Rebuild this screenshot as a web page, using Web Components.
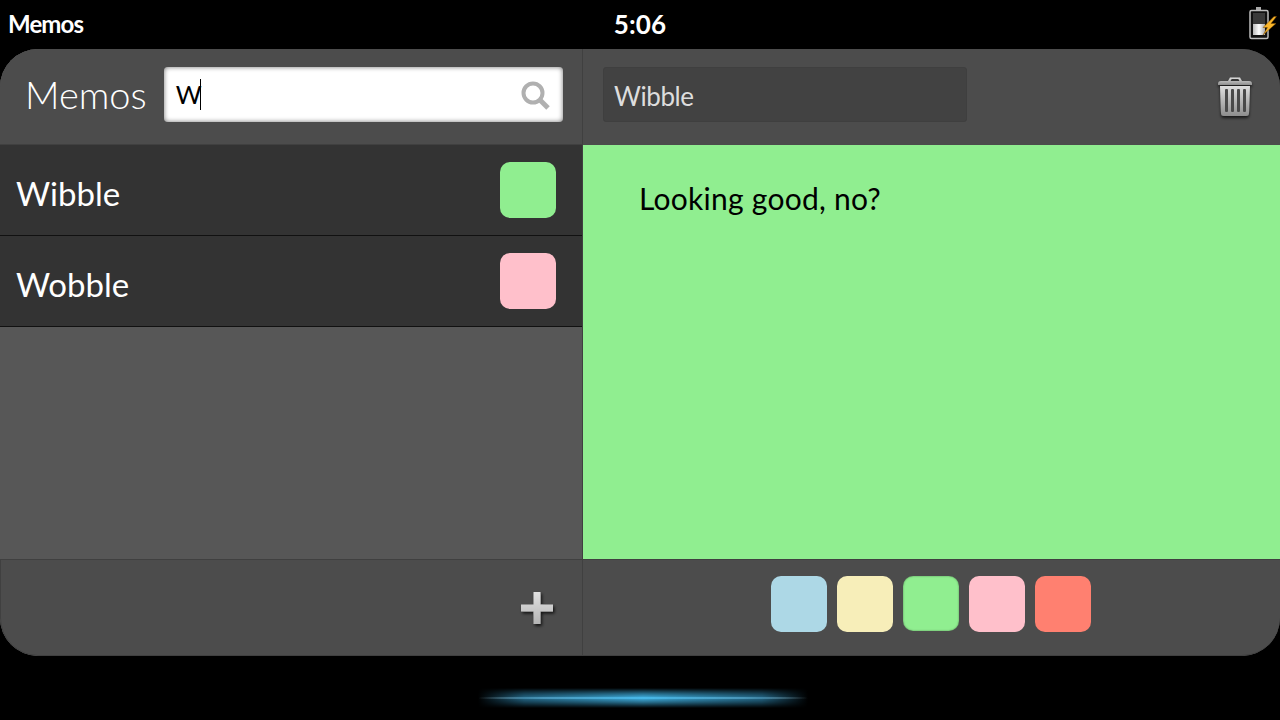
<!DOCTYPE html>
<html>
<head>
<title>Memos</title>
<style>
html,body{margin:0;height:720px;overflow:hidden;background:#000;font-family:Lato,"Open Sans",sans-serif;}
</style>
</head>
<body>
<status-bar title="Memos" time="5:06"></status-bar>
<memo-card>
  <side-pane slot="left">
    <memo-search slot="head" value="W"></memo-search>
    <memo-row name="Wibble" color="#90ee90"></memo-row>
    <memo-row name="Wobble" color="#ffc0cb"></memo-row>
    <add-button slot="foot"></add-button>
  </side-pane>
  <note-pane slot="right" title="Wibble" text="Looking good, no?" color="#90ee90">
    <color-swatch color="#add8e6"></color-swatch>
    <color-swatch color="#f7eeb9"></color-swatch>
    <color-swatch color="#90ee90" picked></color-swatch>
    <color-swatch color="#ffc0cb"></color-swatch>
    <color-swatch color="#ff8070"></color-swatch>
  </note-pane>
</memo-card>
<gesture-glow></gesture-glow>

<script>
function def(name,html,init){
  customElements.define(name,class extends HTMLElement{
    constructor(){
      super();
      this.attachShadow({mode:'open'}).innerHTML=html;
    }
    connectedCallback(){ if(init) init(this,this.shadowRoot); }
  });
}

def('status-bar',`
<style>
:host{display:grid;grid-template-columns:1fr auto 1fr;align-items:center;height:49px;color:#fff;font-weight:700;box-sizing:border-box;padding:0 0 2px 0;}
#title{font-size:24px;letter-spacing:-.9px;margin-left:8px;}
#time{font-size:26px;letter-spacing:.1px;}
svg{justify-self:end;align-self:start;display:block;}
</style>
<span id="title"></span><span id="time"></span>
<svg width="32" height="40" viewBox="0 0 32 40">
  <defs><linearGradient id="cell" x1="0" x2="1" y1="0" y2="0"><stop offset="0" stop-color="#bbb"/><stop offset=".5" stop-color="#fff"/><stop offset="1" stop-color="#aaa"/></linearGradient></defs>
  <rect x="8" y="7" width="5" height="3" fill="#aaa"/>
  <rect x="2" y="10.500" width="18" height="28" rx="1.500" fill="#111" stroke="#bdbdbd" stroke-width="1.500"/>
  <rect x="5" y="13" width="12" height="11" fill="#3a3a3a"/>
  <rect x="5" y="24" width="12" height="11" fill="url(#cell)"/>
  <path d="M26 16.500 L15 27.500 L19.500 27.500 L15 35 L28 23.500 L23 23.500 L28.500 16.500 Z" fill="#f9b52a" stroke="#7a4a00" stroke-width=".5"/>
</svg>`,(el,r)=>{
  r.getElementById('title').textContent=el.getAttribute('title');
  r.getElementById('time').textContent=el.getAttribute('time');
});

def('memo-card',`
<style>
:host{display:grid;grid-template-columns:583px 1fr;height:607px;border-radius:38px;overflow:hidden;background:#4c4c4c;}
</style>
<slot name="left"></slot><slot name="right"></slot>`);

def('side-pane',`
<style>
:host{display:grid;grid-template-rows:96px 1fr 97px;height:607px;box-sizing:border-box;border-right:1px solid #404040;background:#575757;}
header,footer{display:flex;align-items:center;background:#4c4c4c;box-sizing:border-box;}
header{gap:17px;padding:0 19px 3px 25px;border-bottom:1px solid #404040;color:#fff;font-size:38px;font-weight:300;}
header span{margin-bottom:2px;}
footer{justify-content:flex-end;padding:0 29px 0 0;border:solid #404040;border-width:1px 0 1px 1px;border-bottom-left-radius:38px;}
main{display:flex;flex-direction:column;}
</style>
<header><span>Memos</span><slot name="head"></slot></header>
<main><slot></slot></main>
<footer><slot name="foot"></slot></footer>`);

def('memo-search',`
<style>
:host{flex:1;display:flex;align-items:center;height:55px;margin-bottom:1px;box-sizing:border-box;padding:0 11px 0 12px;background:#fff;border-radius:4px;box-shadow:inset 0 0 5px rgba(0,0,0,.55);color:#000;font-size:25px;font-weight:400;}
#val{border-right:1px solid #000;line-height:31px;height:31px;letter-spacing:-1.500px;}
svg{margin-left:auto;margin-top:3px;display:block;}
</style>
<span id="val"></span>
<svg width="32" height="32" viewBox="0 0 32 32" fill="none" stroke="#b0b0b0">
  <circle cx="13" cy="13" r="9.500" stroke-width="4"/>
  <path d="M20 20 L28 28" stroke-width="5"/>
</svg>`,(el,r)=>{ r.getElementById('val').textContent=el.getAttribute('value'); });

def('memo-row',`
<style>
:host{display:flex;align-items:center;justify-content:space-between;height:91px;box-sizing:border-box;padding:0 26px 0 16px;background:#333;border-bottom:1px solid #111;color:#fff;font-size:33px;font-weight:400;}
i{display:block;width:56px;height:56px;border-radius:10px;}
span{padding-top:5px;}
</style>
<span></span><i></i>`,(el,r)=>{
  r.querySelector('span').textContent=el.getAttribute('name');
  r.querySelector('i').style.background=el.getAttribute('color');
});

def('add-button',`
<style>:host{display:block;height:32px;margin-top:1px;} svg{display:block;overflow:visible;}</style>
<svg width="32" height="32" viewBox="0 0 32 32">
  <defs><linearGradient id="p" x1="0" x2="0" y1="0" y2="1"><stop offset="0" stop-color="#e2e2e2"/><stop offset="1" stop-color="#b4b4b4"/></linearGradient>
  <filter id="s" x="-30%" y="-30%" width="170%" height="170%"><feDropShadow dx="1.500" dy="2" stdDeviation="1.500" flood-color="#000" flood-opacity=".75"/></filter></defs>
  <path d="M12.500 0 H19.500 V12.500 H32 V19.500 H19.500 V32 H12.500 V19.500 H0 V12.500 H12.500 Z" fill="url(#p)" filter="url(#s)"/>
</svg>`);

def('note-pane',`
<style>
:host{display:grid;grid-template-rows:96px 1fr 97px;height:607px;background:#4c4c4c;}
header{display:flex;align-items:center;justify-content:space-between;padding:0 27px 6px 20px;box-sizing:border-box;}
#title{width:364px;height:55px;box-sizing:border-box;padding:3px 10px 0;display:flex;align-items:center;background:#424242;border:1px solid #3f3f3f;border-radius:3px;color:#ddd;font-size:26px;letter-spacing:-.4px;}
#note{padding:35px 56px;font-size:30px;letter-spacing:.25px;color:#000;}
footer{display:flex;justify-content:center;gap:10px;padding:16px 1px 0 0;box-sizing:border-box;border:solid #404040;border-width:1px 0;border-bottom-right-radius:38px;}
svg{display:block;overflow:visible;margin-top:6px;}
</style>
<header><div id="title"></div>
<svg width="36" height="42" viewBox="0 0 36 42">
  <defs><linearGradient id="t" x1="0" x2="0" y1="0" y2="1"><stop offset="0" stop-color="#dedede"/><stop offset="1" stop-color="#8e8e8e"/></linearGradient>
  <filter id="ts" x="-20%" y="-20%" width="140%" height="140%"><feDropShadow dx="0" dy="2" stdDeviation="1.500" flood-color="#000" flood-opacity=".7"/></filter></defs>
  <g filter="url(#ts)">
    <path d="M1 8 Q1 5 4 5 H11 L13 1.500 H23 L25 5 H32 Q35 5 35 8 L35 9 H1 Z M14.500 3 L13.500 5 H22.500 L21.500 3 Z" fill="url(#t)" fill-rule="evenodd"/>
    <path d="M3 10 H33 L32 37 Q32 40 29 40 H7 Q4 40 4 37 Z" fill="url(#t)"/>
    <g fill="#4a4a4a"><rect x="8" y="13" width="3" height="23" rx="1"/><rect x="14" y="13" width="3" height="23" rx="1"/><rect x="20" y="13" width="3" height="23" rx="1"/><rect x="26" y="13" width="3" height="23" rx="1"/></g>
  </g>
</svg></header>
<div id="note"></div>
<footer><slot></slot></footer>`,(el,r)=>{
  r.getElementById('title').textContent=el.getAttribute('title');
  const n=r.getElementById('note');
  n.textContent=el.getAttribute('text');
  n.style.background=el.getAttribute('color');
});

def('color-swatch',`
<style>
:host{display:block;width:56px;height:56px;border-radius:10px;box-sizing:border-box;}
:host([picked]){height:55px;box-shadow:inset 0 0 2px rgba(0,0,0,.45);}
</style>`,(el)=>{ el.style.background=el.getAttribute('color'); });

def('gesture-glow',`
<style>
:host{display:grid;align-items:center;width:330px;height:20px;margin:32px 0 0 478px;}
div{grid-area:1/1;height:20px;background:linear-gradient(90deg,rgba(40,110,150,0),rgba(45,130,170,.8) 14%,rgba(65,180,230,1) 50%,rgba(45,130,170,.8) 86%,rgba(40,110,150,0));-webkit-mask-image:linear-gradient(rgba(0,0,0,0),rgba(0,0,0,.6) 28%,#000 50%,rgba(0,0,0,.6) 72%,rgba(0,0,0,0));mask-image:linear-gradient(rgba(0,0,0,0),rgba(0,0,0,.6) 28%,#000 50%,rgba(0,0,0,.6) 72%,rgba(0,0,0,0));}
b{grid-area:1/1;height:2px;background:linear-gradient(90deg,rgba(170,205,220,0),rgba(190,220,232,.85) 20%,#c0ecf8 48%,rgba(195,222,232,.85) 80%,rgba(170,205,220,0));}
</style>
<div></div><b></b>`);
</script>
</body>
</html>
